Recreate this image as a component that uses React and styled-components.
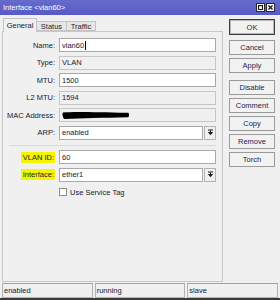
import React from 'react';
import styled, { createGlobalStyle } from 'styled-components';

const Global = createGlobalStyle`
  html, body { margin: 0; padding: 0; background: #f0f0f0; }
  body { font-family: "Liberation Sans", Arial, sans-serif; }
`;

const Window = styled.div`
  width: 280px;
  height: 300px;
  box-sizing: border-box;
  display: flex;
  flex-direction: column;
  background: #f0f0f0;
  border-bottom: 2px solid #3a3a3a;
  font-size: 7.5px;
  color: #181834;
  overflow: hidden;
`;

const TitleBar = styled.div`
  height: 15px;
  flex: none;
  display: flex;
  align-items: center;
  justify-content: space-between;
  background: linear-gradient(#666ccd, #555bc2);
  padding: 0 5px 0 3px;
  color: #ffffff;
`;

const TitleText = styled.span`
  font-size: 7.5px;
`;

const TitleButtons = styled.div`
  display: flex;
  gap: 1px;
`;

const TitleButton = styled.div`
  width: 9px;
  height: 9px;
  box-sizing: border-box;
  border: 1px solid #2a2a2a;
  background: #f4f4f4;
  display: flex;
  align-items: center;
  justify-content: center;
`;

const Body = styled.div`
  flex: 1;
  min-height: 0;
  display: flex;
  padding: 3px 0 0 2px;
`;

const LeftCol = styled.div`
  width: 221px;
  display: flex;
  flex-direction: column;
`;

const TabRow = styled.div`
  height: 13px;
  flex: none;
  display: flex;
  align-items: flex-end;
  padding-left: 1px;
  position: relative;
  z-index: 1;
`;

const Tab = styled.div`
  box-sizing: border-box;
  width: ${p => p.$w}px;
  height: ${p => (p.$active ? 14 : 10)}px;
  margin-bottom: ${p => (p.$active ? -1 : 0)}px;
  margin-left: ${p => (p.$active ? 0 : -1)}px;
  border: 1px solid #c4c4c4;
  border-bottom: ${p => (p.$active ? 'none' : '1px solid #c4c4c4')};
  background: ${p => (p.$active ? '#f0f0f0' : '#e6e6e6')};
  display: flex;
  align-items: ${p => (p.$active ? 'flex-start' : 'center')};
  padding-top: ${p => (p.$active ? 2 : 0)}px;
  justify-content: center;
  font-size: 7.5px;
  color: #181834;
`;

const Panel = styled.div`
  flex: 1;
  box-sizing: border-box;
  border: 1px solid #c8c8c8;
  background: #f0f0f0;
  padding: 6px 6px 0 0;
  display: flex;
  flex-direction: column;
`;

const FieldGrid = styled.div`
  display: grid;
  grid-template-columns: 52px 1fr;
  column-gap: 4px;
  grid-auto-rows: 14px;
  row-gap: 3.5px;
`;

const Label = styled.div`
  display: flex;
  align-items: center;
  justify-content: flex-end;
  white-space: nowrap;
`;

const Highlight = styled.span`
  background: #f5f500;
  padding: 1px 1px 1px 2px;
  line-height: 9px;
`;

const Field = styled.div`
  box-sizing: border-box;
  height: 14px;
  border: 1px solid ${p => (p.$readOnly ? '#c6c6c6' : '#a9a9a9')};
  background: ${p => (p.$readOnly ? '#f0f0f0' : '#ffffff')};
  display: flex;
  align-items: center;
  padding-left: 2px;
  flex: 1;
  min-width: 0;
`;

const Caret = styled.span`
  width: 1px;
  height: 9px;
  background: #000;
  margin-left: 0.5px;
`;

const SelectWrap = styled.div`
  display: flex;
  gap: 1px;
`;

const SelectButton = styled.div`
  box-sizing: border-box;
  width: 12px;
  height: 14px;
  border: 1px solid #b4b4b4;
  background: #f0f0f0;
  display: flex;
  align-items: center;
  justify-content: center;
`;

const Separator = styled.div`
  height: 1px;
  background: #dadada;
  margin: 5px 0 4.5px 6px;
`;

const CheckRow = styled.div`
  display: flex;
  align-items: center;
  gap: 3px;
`;

const CheckBox = styled.div`
  box-sizing: border-box;
  width: 8px;
  height: 8px;
  border: 1px solid #8c8c8c;
  background: #ffffff;
`;

const ButtonCol = styled.div`
  width: 46px;
  margin-left: 6px;
  padding-top: 1px;
  display: flex;
  flex-direction: column;
`;

const Button = styled.div`
  box-sizing: border-box;
  height: ${p => (p.$default ? 16 : 15)}px;
  margin-top: ${p => p.$mt}px;
  border: 1px solid ${p => (p.$default ? '#3c3c3c' : '#9a9a9a')};
  box-shadow: ${p => (p.$default ? 'inset 0 0 0 1px #b8b8b8' : 'none')};
  background: #f2f2f2;
  display: flex;
  align-items: center;
  justify-content: center;
  color: #22224e;
  font-size: 7.5px;
`;

const StatusBar = styled.div`
  height: 15px;
  flex: none;
  margin-top: 1px;
  padding: 0 2px;
  display: grid;
  grid-template-columns: 1fr 1fr 1fr;
  column-gap: 2px;
`;

const StatusCell = styled.div`
  box-sizing: border-box;
  border: 1px solid #b4b4b4;
  border-top-color: #a2a2a2;
  display: flex;
  align-items: center;
  padding-left: 1px;
  color: #181834;
`;

const DropIcon = () => (
  <svg width="7" height="7" viewBox="0 0 7 7">
    <rect x="1" y="0.5" width="5" height="1" fill="#1a1a1a" />
    <rect x="3" y="1.5" width="1" height="2" fill="#1a1a1a" />
    <polygon points="0.8,3 6.2,3 3.5,6.3" fill="#1a1a1a" />
  </svg>
);

const Select = ({ value }) => (
  <SelectWrap>
    <Field>{value}</Field>
    <SelectButton>
      <DropIcon />
    </SelectButton>
  </SelectWrap>
);

const buttons = [
  { t: 'OK', mt: 0, d: true },
  { t: 'Cancel', mt: 5 },
  { t: 'Apply', mt: 3 },
  { t: 'Disable', mt: 7 },
  { t: 'Comment', mt: 3 },
  { t: 'Copy', mt: 3 },
  { t: 'Remove', mt: 3 },
  { t: 'Torch', mt: 3 },
];

export default function App() {
  return (
    <>
      <Global />
      <Window>
        <TitleBar>
          <TitleText>Interface &lt;vlan60&gt;</TitleText>
          <TitleButtons>
            <TitleButton>
              <svg width="5" height="5" viewBox="0 0 5 5">
                <rect x="0.5" y="0.5" width="4" height="4" fill="none" stroke="#1a1a1a" strokeWidth="1" />
                <rect x="0" y="0" width="5" height="1.2" fill="#1a1a1a" />
              </svg>
            </TitleButton>
            <TitleButton>
              <svg width="5" height="5" viewBox="0 0 5 5">
                <path d="M0.5 0.5 L4.5 4.5 M4.5 0.5 L0.5 4.5" stroke="#1a1a1a" strokeWidth="1.3" />
              </svg>
            </TitleButton>
          </TitleButtons>
        </TitleBar>
        <Body>
          <LeftCol>
            <TabRow>
              <Tab $active $w={34}>General</Tab>
              <Tab $w={31}>Status</Tab>
              <Tab $w={30}>Traffic</Tab>
            </TabRow>
            <Panel>
              <FieldGrid>
                <Label>Name:</Label>
                <Field>vlan60<Caret /></Field>
                <Label>Type:</Label>
                <Field $readOnly>VLAN</Field>
                <Label>MTU:</Label>
                <Field>1500</Field>
                <Label>L2 MTU:</Label>
                <Field $readOnly>1594</Field>
                <Label>MAC Address:</Label>
                <Field $readOnly>
                  <svg width="68" height="9" viewBox="0 0 68 9">
                    <path d="M1 1.5 C10 0.5 30 1 66 1.8 C67.5 2 67.5 6 66 6.2 C40 6.8 20 7 3 8 C0.5 8.2 0 2 1 1.5 Z" fill="#000" />
                  </svg>
                </Field>
                <Label>ARP:</Label>
                <Select value="enabled" />
              </FieldGrid>
              <Separator />
              <FieldGrid>
                <Label><Highlight>VLAN ID:</Highlight></Label>
                <Field>60</Field>
                <Label><Highlight>Interface:</Highlight></Label>
                <Select value="ether1" />
                <div />
                <CheckRow>
                  <CheckBox />
                  <span>Use Service Tag</span>
                </CheckRow>
              </FieldGrid>
            </Panel>
          </LeftCol>
          <ButtonCol>
            {buttons.map(b => (
              <Button key={b.t} $mt={b.mt} $default={b.d}>{b.t}</Button>
            ))}
          </ButtonCol>
        </Body>
        <StatusBar>
          <StatusCell>enabled</StatusCell>
          <StatusCell>running</StatusCell>
          <StatusCell>slave</StatusCell>
        </StatusBar>
      </Window>
    </>
  );
}
